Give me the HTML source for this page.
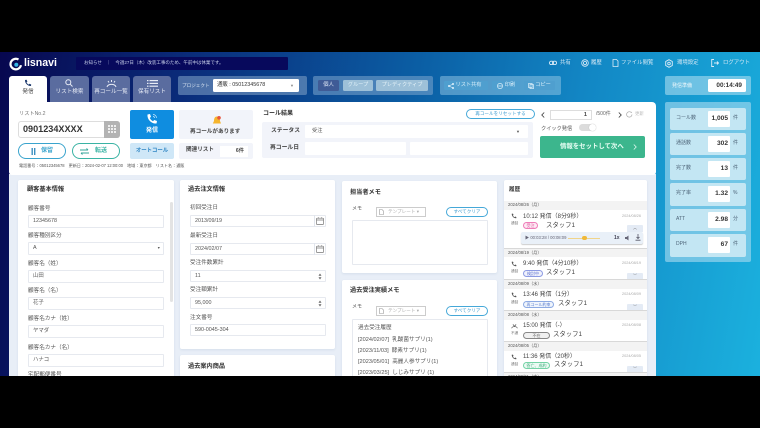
<!DOCTYPE html>
<html lang="ja"><head><meta charset="utf-8"><title>lisnavi</title>
<style>
*{box-sizing:border-box;margin:0;padding:0}
html,body{width:760px;height:428px;overflow:hidden;background:#000}
body{position:relative;font-family:"Liberation Sans","Noto Sans CJK JP",sans-serif;color:#333}
#v{position:absolute;left:0;top:52px;width:760px;height:324px;overflow:hidden;background:linear-gradient(100deg,#07074f 0%,#0a2a78 22%,#0b5fa5 52%,#1286c4 72%,#1bb1de 100%);filter:blur(.25px)}
#v div,#v span,#v svg{position:absolute}
.t{white-space:nowrap;line-height:1}
.b{background:#fff;border:1px solid #e6e9ef;border-radius:1px}
.card{background:#fff;border-radius:2px;box-shadow:0 1px 2px rgba(120,140,175,.16)}
.l{font-size:5.6px;color:#555;white-space:nowrap;line-height:1}
.i{font-size:5.4px;color:#555;white-space:nowrap;line-height:1}
.h{font-size:6.2px;font-weight:700;color:#333;white-space:nowrap;line-height:1}
.tab{background:#5a6c9f;border-radius:3px 3px 0 0;top:24px;height:26px}
.tab .t{left:0;right:0;text-align:center;color:#e8ecf6;font-size:5.6px;top:14px}
.box{background:rgba(175,200,225,.45);border-radius:2px}
.nav{color:#d5e8f5;font-size:5.4px;top:9px}
.st{left:670px;width:76px;height:22.5px;background:#c3e6f3;border-radius:2px}
.st .n{left:38px;top:3px;width:22px;height:16px;background:#fff;border-radius:1px;font-size:6.6px;font-weight:700;color:#333;text-align:right;padding:5px 2px 0 0;line-height:1}
.st .a{left:6px;top:8px;font-size:5px;color:#4d6478;white-space:nowrap;line-height:1}
.st .u{left:63px;top:8px;font-size:5px;color:#4d6478;line-height:1}
.d{left:504px;width:143px;height:9px;background:#f3f3f3;font-size:4.2px;color:#555;padding:2.4px 0 0 4px;line-height:1;white-space:nowrap}
.ln{left:504px;width:143px;height:1px;background:#d8d8d8}
.tm{left:523px;font-size:6px;color:#444;white-space:nowrap;line-height:1}
.rd{left:622px;font-size:3.8px;color:#aaa;line-height:1;white-space:nowrap}
.sm{left:511px;font-size:3.6px;color:#777;line-height:1}
.bd{height:7px;border-radius:4px;font-size:4px;text-align:center;line-height:6px;border:.6px solid}
.nm{font-size:6.4px;color:#444;white-space:nowrap;line-height:1}
.ex{left:627px;width:16px;height:6px;background:#e4ebf5;border-radius:1px 1px 0 0}
.cb{height:10px;border:.8px solid #45a8d8;border-radius:5px;font-size:4.6px;color:#3c9bd0;text-align:center;line-height:8.5px;white-space:nowrap;background:#fff}
.tp{width:50px;height:9.5px;border:.7px solid #ccc;background:#fff;font-size:4.6px;color:#aaa;padding:2px 0 0 11px;line-height:1;white-space:nowrap}
.ml{left:358px;font-size:5.6px;color:#555;white-space:nowrap;line-height:1}
.ar{font-size:5px;color:#666;line-height:1}
.pbtn{height:9px;background:#4f9fcf;border-radius:1px;font-size:5.2px;color:#d9eefa;text-align:center;line-height:9px;white-space:nowrap}
</style></head><body>
<div id="v">
<!-- header -->
<svg style="left:9px;top:4.5px" width="14" height="14" viewBox="0 0 14 14"><path d="M9.5 2.5 A5.3 5.3 0 1 0 12 8.2" fill="none" stroke="#fff" stroke-width="2.2"/><circle cx="7.3" cy="7.8" r="2" fill="#36b5e5"/></svg>
<div class="t" style="left:24px;top:6px;font-size:10.6px;font-weight:700;color:#fff">lisnavi</div>
<div style="left:76px;top:5px;width:212px;height:13px;background:#07095c;border-radius:1px"></div>
<div class="t" style="left:84px;top:9px;font-size:4.5px;color:#c8d0ea">お知らせ　｜　今週27日（木）改装工事のため、午前中は休業です。</div>

<svg style="left:549px;top:8px" width="8" height="6" viewBox="0 0 8 6" fill="none" stroke="#dcecf8" stroke-width=".9"><rect x=".5" y="1.2" width="4" height="3.4" rx="1.6"/><rect x="3.5" y="1.2" width="4" height="3.4" rx="1.6"/></svg>
<div class="t nav" style="left:560px">共有</div>
<svg style="left:581px;top:7px" width="8" height="8" viewBox="0 0 8 8" fill="none" stroke="#dcecf8" stroke-width=".8"><circle cx="4" cy="4" r="3.3"/><circle cx="4" cy="4" r="1.6"/></svg>
<div class="t nav" style="left:591px">履歴</div>
<svg style="left:612px;top:7px" width="7" height="8" viewBox="0 0 7 8" fill="none" stroke="#dcecf8" stroke-width=".8"><path d="M1 .5H4.5L6 2V7.5H1Z"/></svg>
<div class="t nav" style="left:621px">ファイル閲覧</div>
<svg style="left:665px;top:6.5px" width="8" height="9" viewBox="0 0 8 9" fill="none" stroke="#dcecf8" stroke-width=".9"><path d="M4 .7 7.3 2.5V6.5L4 8.3 .7 6.5V2.5Z"/><circle cx="4" cy="4.5" r="1.3"/></svg>
<div class="t nav" style="left:677px">環境設定</div>
<svg style="left:711px;top:7px" width="8" height="8" viewBox="0 0 8 8" fill="none" stroke="#dcecf8" stroke-width=".9"><path d="M3 .5H.7V7.5H3M3 4H7.5M6 2.5 7.5 4 6 5.5"/></svg>
<div class="t nav" style="left:723px">ログアウト</div>

<!-- tabs -->
<div class="tab" style="left:9px;width:38px;background:#fff;height:27px"><svg style="left:15px;top:3px" width="8" height="8" viewBox="0 0 8 8"><path d="M1 1 2.6 .8 3.4 2.6 2.5 3.4C3 4.4 3.7 5.1 4.7 5.6L5.5 4.7 7.2 5.5 7 7C3.8 7.3.8 4.2 1 1Z" fill="#1e3a6e"/></svg><div class="t" style="color:#444">発信</div></div>
<div class="tab" style="left:50px;width:39px"><svg style="left:15px;top:3px" width="8" height="8" viewBox="0 0 8 8" fill="none" stroke="#e8ecf6" stroke-width="1"><circle cx="3.3" cy="3.3" r="2.5"/><path d="M5.2 5.2 7.5 7.5"/></svg><div class="t">リスト検索</div></div>
<div class="tab" style="left:92px;width:38px"><svg style="left:14px;top:3px" width="11" height="9" viewBox="0 0 11 9" fill="none" stroke="#e8ecf6" stroke-width="1"><path d="M1 8C2 4.5 9 4.5 10 8M5.5 1V3M2 2 3 3.5M9 2 8 3.5"/></svg><div class="t">再コール一覧</div></div>
<div class="tab" style="left:133px;width:38px"><svg style="left:14px;top:4px" width="11" height="7" viewBox="0 0 11 7" fill="#e8ecf6"><rect width="1.5" height="1.2"/><rect x="2.5" width="8.5" height="1.2"/><rect y="2.8" width="1.5" height="1.2"/><rect x="2.5" y="2.8" width="8.5" height="1.2"/><rect y="5.6" width="1.5" height="1.2"/><rect x="2.5" y="5.6" width="8.5" height="1.2"/></svg><div class="t">保有リスト</div></div>

<!-- project -->
<div class="box" style="left:178px;top:24px;width:129px;height:19px;background:rgba(120,155,195,.6)"></div>
<div class="t" style="left:182px;top:32px;font-size:4.6px;color:#dbe6f3">プロジェクト</div>
<div style="left:213px;top:27px;width:86px;height:13px;background:#fff;border-radius:1.5px"></div>
<div class="t" style="left:217px;top:31px;font-size:5.4px;color:#333">通販 : 05012345678</div>
<div class="t" style="left:290px;top:32px;font-size:4px;color:#888">▼</div>
<!-- group -->
<div class="box" style="left:313px;top:24px;width:120px;height:19px;background:rgba(125,165,205,.55)"></div>
<div class="t" style="left:318px;top:28px;width:21px;height:11px;background:#3f5b96;border-radius:1.5px;font-size:5.4px;color:#d8e2f2;text-align:center;line-height:11px">個人</div>
<div class="t" style="left:343px;top:28px;width:30px;height:11px;background:#9dc0d8;border-radius:1.5px;font-size:5.2px;color:#dff0f8;text-align:center;line-height:11px">グループ</div>
<div class="t" style="left:376px;top:28px;width:52px;height:11px;background:#9dc0d8;border-radius:1.5px;font-size:5.2px;color:#e6f3f9;text-align:center;line-height:11px">プレディクティブ</div>
<!-- tools -->
<div class="box" style="left:440px;top:24px;width:121px;height:19px;background:rgba(150,200,230,.5)"></div>
<div class="pbtn" style="left:444px;top:29px;width:44px;padding-left:5px">リスト共有</div>
<svg style="left:448px;top:30.5px" width="6" height="6" viewBox="0 0 6 6" fill="#dff1fb"><circle cx="1" cy="3" r="1"/><circle cx="5" cy="1" r="1"/><circle cx="5" cy="5" r="1"/><path d="M1 3 5 1M1 3 5 5" stroke="#dff1fb" stroke-width=".6"/></svg>
<div class="pbtn" style="left:492px;top:29px;width:28px;padding-left:8px">印刷</div>
<svg style="left:497px;top:30.5px" width="6" height="6" viewBox="0 0 6 6" fill="none" stroke="#dff1fb" stroke-width=".7"><circle cx="3" cy="3" r="2.6"/><path d="M1 3H5"/></svg>
<div class="pbtn" style="left:524px;top:29px;width:31px;padding-left:7px">コピー</div>
<svg style="left:528px;top:30.5px" width="6" height="6" viewBox="0 0 6 6" fill="none" stroke="#dff1fb" stroke-width=".7"><rect x=".5" y=".5" width="3.6" height="4"/><rect x="2" y="1.6" width="3.5" height="4"/></svg>
<!-- right top -->
<div class="box" style="left:665px;top:24px;width:86px;height:19px;background:rgba(170,220,240,.6)"></div>
<div class="t" style="left:672px;top:31.5px;font-size:5px;color:#eef8fc">発信準備</div>
<div class="t" style="left:708px;top:27px;width:38px;height:13px;background:#fff;border-radius:1.5px;font-size:6.4px;font-weight:700;color:#333;text-align:right;padding-right:4px;line-height:13px">00:14:49</div>

<!-- main -->
<div style="left:9px;top:122px;width:647px;height:202px;background:#e8eef7"></div>
<div style="left:9px;top:50px;width:647px;height:73px;background:#fff;border-radius:0 4px 3px 3px"></div>
<div class="t" style="left:19px;top:60px;font-size:5.2px;color:#777">リストNo.2</div>
<div style="left:18px;top:69px;width:102px;height:17px;background:#fff;border:1px solid #ddd;border-radius:3px"></div>
<div class="t" style="left:23px;top:73px;font-size:9.1px;font-weight:700;color:#333">0901234XXXX</div>
<div style="left:104px;top:69px;width:16px;height:17px;background:#b3b3b3;border-radius:0 3px 3px 0"></div>
<svg style="left:108px;top:73px" width="8" height="8" viewBox="0 0 8 8" fill="#eee"><rect width="2" height="2"/><rect x="3" width="2" height="2"/><rect x="6" width="2" height="2"/><rect y="3" width="2" height="2"/><rect x="3" y="3" width="2" height="2"/><rect x="6" y="3" width="2" height="2"/><rect y="6" width="2" height="2"/><rect x="3" y="6" width="2" height="2"/><rect x="6" y="6" width="2" height="2"/></svg>
<div style="left:18px;top:91px;width:48px;height:16px;border:1px solid #3aa4cd;border-radius:8px;background:#fff"></div>
<svg style="left:31px;top:95.5px" width="5" height="7" viewBox="0 0 5 7" fill="#3c8fc0"><rect x=".5" width="1.4" height="7"/><rect x="3" width="1.4" height="7"/></svg>
<div class="t" style="left:41px;top:96px;font-size:6px;color:#3aa4cd;font-weight:700">保留</div>
<div style="left:72px;top:91px;width:48px;height:16px;border:1px solid #3ab3a4;border-radius:8px;background:#fff"></div>
<svg style="left:80px;top:95.5px" width="9" height="7" viewBox="0 0 9 7" fill="none" stroke="#34a59a" stroke-width=".9"><path d="M0 2H8M6.5.5 8 2M9 5H1M2.5 6.5 1 5"/></svg>
<div class="t" style="left:95px;top:96px;font-size:6px;color:#3ab3a4;font-weight:700">転送</div>
<div style="left:130px;top:58px;width:44px;height:29px;background:#0f8de0;border-radius:2px"></div>
<svg style="left:146px;top:61px" width="12" height="12" viewBox="0 0 12 12"><path d="M1.5 1.5 4 1 5 3.8 3.8 5C4.5 6.5 5.5 7.6 7 8.2L8.2 7 11 8 10.5 10.5C5.5 11 1 6.5 1.5 1.5Z" fill="#fff"/><path d="M7 1.5A3.5 3.5 0 0 1 10.5 5M7 3.5A1.5 1.5 0 0 1 8.5 5" fill="none" stroke="#cfeafa" stroke-width=".7"/></svg>
<div class="t" style="left:146px;top:76px;font-size:6px;font-weight:700;color:#fff">発信</div>
<div class="t" style="left:130px;top:91px;width:44px;height:16px;background:#cfe7f7;border-radius:2px;font-size:5.4px;font-weight:700;color:#2f86c4;text-align:center;line-height:16px">オートコール</div>
<div style="left:179px;top:58px;width:74px;height:29px;background:#f2f4fa;border-radius:2px"></div>
<svg style="left:212px;top:63px" width="10" height="11" viewBox="0 0 10 11"><path d="M5 1.5C2.5 1.5 2 4 2 6L.8 8.5H9L8 6C8 4 7.5 1.5 5 1.5Z" fill="#f5b52e"/><circle cx="7" cy="2.8" r="1.8" fill="#e8553c"/></svg>
<div class="t" style="left:190px;top:78px;font-size:5.6px;font-weight:700;color:#444">再コールがあります</div>
<div style="left:179px;top:91px;width:74px;height:16px;background:#f2f4fa;border-radius:2px"></div>
<div class="t" style="left:186px;top:96px;font-size:5.6px;font-weight:700;color:#444">関連リスト</div>
<div class="t" style="left:220px;top:94px;width:28px;height:11px;background:#fff;font-size:5.2px;color:#444;text-align:right;padding-right:4px;line-height:11px;font-weight:700">6件</div>
<div class="t" style="left:19px;top:112px;font-size:4.1px;color:#555">電話番号：05012345678　更新日：2024-02-07 12:00:00　地域：東京都　リスト名：通販</div>
<div class="t" style="left:263px;top:59px;font-size:6px;font-weight:700;color:#333">コール結果</div>
<div style="left:262px;top:70px;width:271px;height:36px;background:#f2f4fa;border-radius:2px"></div>
<div class="t" style="left:271px;top:77px;font-size:5.8px;font-weight:700;color:#444">ステータス</div>
<div style="left:305px;top:73px;width:223px;height:13px;background:#fff;border-radius:1px"></div>
<div class="t" style="left:312px;top:77px;font-size:5.2px;color:#555">受注</div>
<div class="t" style="left:516px;top:78px;font-size:4px;color:#555">▼</div>
<div class="t" style="left:270px;top:94px;font-size:5.8px;font-weight:700;color:#444">再コール日</div>
<div style="left:305px;top:90px;width:101px;height:13px;background:#fff;border-radius:1px"></div>
<div style="left:410px;top:90px;width:118px;height:13px;background:#fff;border-radius:1px"></div>
<div class="cb" style="left:466px;top:57px;width:69px">再コールをリセットする</div>
<svg style="left:541px;top:60px" width="4" height="6" viewBox="0 0 4 6" fill="none" stroke="#444" stroke-width=".9"><path d="M3.2.5 .8 3 3.2 5.5"/></svg>
<div class="t" style="left:550px;top:57.5px;width:42px;height:10px;background:#fff;border:1px solid #ddd;font-size:5.6px;color:#444;text-align:right;padding-right:4px;font-weight:700;line-height:8.5px">1</div>
<div class="t" style="left:596px;top:60px;font-size:5px;color:#666">/500件</div>
<svg style="left:618px;top:60px" width="4" height="6" viewBox="0 0 4 6" fill="none" stroke="#444" stroke-width=".9"><path d="M.8.5 3.2 3 .8 5.5"/></svg>
<svg style="left:626px;top:58.5px" width="7" height="7" viewBox="0 0 7 7" fill="none" stroke="#aaa" stroke-width=".7"><path d="M6 3.5A2.7 2.7 0 1 1 4.5 1L6 1.5"/></svg>
<div class="t" style="left:635px;top:60px;font-size:4.4px;color:#bbb">更新</div>
<div class="t" style="left:541px;top:75px;font-size:5.2px;color:#555">クイック発信</div>
<div style="left:579px;top:72px;width:17px;height:7px;background:#dcdcdc;border-radius:4px"></div>
<div style="left:589px;top:72px;width:7px;height:7px;background:#fff;border-radius:4px;box-shadow:0 0 1px #aaa"></div>
<div class="t" style="left:540px;top:84px;width:105px;height:22px;background:#3cb68d;border-radius:2px;font-size:6.4px;font-weight:700;color:#eafff5;line-height:22px;padding-left:20px">情報をセットして次へ</div>
<svg style="left:633px;top:92px" width="4" height="6" viewBox="0 0 4 6" fill="none" stroke="#dff8ee" stroke-width=".8"><path d="M.8.5 3.2 3 .8 5.5"/></svg>

<!-- customer card -->
<div class="card" style="left:18px;top:128px;width:156px;height:200px"></div>
<div class="h" style="left:27px;top:135px">顧客基本情報</div>
<div style="left:170px;top:150px;width:3px;height:100px;background:#e3e3e3;border-radius:2px"></div>
<div class="l" style="left:28px;top:155px">顧客番号</div><div class="b" style="left:28px;top:163px;width:136px;height:13px"></div><div class="i" style="left:33px;top:167px">12345678</div>
<div class="l" style="left:28px;top:182px">顧客種別区分</div><div class="b" style="left:28px;top:190px;width:136px;height:12.5px"></div><div class="i" style="left:33px;top:194px">A</div><div class="t" style="left:157px;top:195px;font-size:3.6px;color:#555">▼</div>
<div class="l" style="left:28px;top:210px">顧客名（姓）</div><div class="b" style="left:28px;top:218px;width:136px;height:13px"></div><div class="i" style="left:33px;top:222px">山田</div>
<div class="l" style="left:28px;top:237px">顧客名（名）</div><div class="b" style="left:28px;top:245px;width:136px;height:13px"></div><div class="i" style="left:33px;top:249px">花子</div>
<div class="l" style="left:28px;top:265px">顧客名カナ（姓）</div><div class="b" style="left:28px;top:273px;width:136px;height:13px"></div><div class="i" style="left:33px;top:277px">ヤマダ</div>
<div class="l" style="left:28px;top:294px">顧客名カナ（名）</div><div class="b" style="left:28px;top:302px;width:136px;height:13px"></div><div class="i" style="left:33px;top:306px">ハナコ</div>
<div class="l" style="left:28px;top:321px">宅配郵便番号</div>

<!-- orders -->
<div class="card" style="left:180px;top:128px;width:155px;height:169px"></div>
<div class="h" style="left:188px;top:135px">過去注文情報</div>
<div class="l" style="left:190px;top:154px">初回受注日</div><div class="b" style="left:190px;top:163px;width:136px;height:12px"></div><div class="i" style="left:195px;top:166.5px">2013/09/19</div>
<div style="left:314px;top:163px;width:1px;height:12px;background:#e1e5ec"></div>
<svg style="left:316px;top:165px" width="8" height="8" viewBox="0 0 8 8" fill="none" stroke="#777" stroke-width=".7"><rect x=".5" y="1.2" width="7" height="6.3" rx=".6"/><path d="M.5 3H7.5M2.3.3V1.6M5.7.3V1.6"/></svg>
<div class="l" style="left:190px;top:182px">最新受注日</div><div class="b" style="left:190px;top:191px;width:136px;height:12px"></div><div class="i" style="left:195px;top:194.5px">2024/02/07</div>
<div style="left:314px;top:191px;width:1px;height:12px;background:#e1e5ec"></div>
<svg style="left:316px;top:193px" width="8" height="8" viewBox="0 0 8 8" fill="none" stroke="#777" stroke-width=".7"><rect x=".5" y="1.2" width="7" height="6.3" rx=".6"/><path d="M.5 3H7.5M2.3.3V1.6M5.7.3V1.6"/></svg>
<div class="l" style="left:190px;top:209px">受注件数累計</div><div class="b" style="left:190px;top:218px;width:136px;height:12px"></div><div class="i" style="left:195px;top:221.5px">11</div>
<svg style="left:318px;top:220.5px" width="4" height="7" viewBox="0 0 4 7" fill="#666"><path d="M2 .5 3.5 2.7H.5ZM2 6.5 3.5 4.3H.5Z"/></svg>
<div class="l" style="left:190px;top:236px">受注額累計</div><div class="b" style="left:190px;top:245px;width:136px;height:12px"></div><div class="i" style="left:195px;top:248.5px">95,000</div>
<svg style="left:318px;top:247.5px" width="4" height="7" viewBox="0 0 4 7" fill="#666"><path d="M2 .5 3.5 2.7H.5ZM2 6.5 3.5 4.3H.5Z"/></svg>
<div class="l" style="left:190px;top:264px">注文番号</div><div class="b" style="left:190px;top:272px;width:136px;height:12px"></div><div class="i" style="left:195px;top:275.5px">590-0045-304</div>
<div class="card" style="left:180px;top:303px;width:155px;height:40px"></div>
<div class="h" style="left:188px;top:312px">過去案内商品</div>

<!-- memo -->
<div class="card" style="left:342px;top:129px;width:155px;height:92px"></div>
<div class="h" style="left:350px;top:138px">担当者メモ</div>
<div class="l" style="left:352px;top:155px;font-size:5px">メモ</div>
<div class="tp" style="left:376px;top:155px">テンプレート ▾</div>
<svg style="left:379px;top:156.5px" width="5" height="6" viewBox="0 0 5 6" fill="none" stroke="#999" stroke-width=".6"><path d="M.5.5H3L4.5 2V5.5H.5Z"/></svg>
<div class="cb" style="left:446px;top:155px;width:42px">すべてクリア</div>
<div class="b" style="left:352px;top:168px;width:136px;height:45px"></div>
<div class="card" style="left:342px;top:228px;width:155px;height:100px"></div>
<div class="h" style="left:350px;top:236px">過去受注実績メモ</div>
<div class="l" style="left:352px;top:253px;font-size:5px">メモ</div>
<div class="tp" style="left:376px;top:254px">テンプレート ▾</div>
<svg style="left:379px;top:255.5px" width="5" height="6" viewBox="0 0 5 6" fill="none" stroke="#999" stroke-width=".6"><path d="M.5.5H3L4.5 2V5.5H.5Z"/></svg>
<div class="cb" style="left:446px;top:254px;width:42px">すべてクリア</div>
<div class="b" style="left:352px;top:267px;width:136px;height:60px"></div>
<div class="ml" style="top:274px">過去受注履歴</div>
<div class="ml" style="top:286px">[2024/02/07]&nbsp; 乳酸菌サプリ(1)</div>
<div class="ml" style="top:297px">[2023/11/03]&nbsp; 酵素サプリ(1)</div>
<div class="ml" style="top:308px">[2023/05/01]&nbsp; 高麗人参サプリ(1)</div>
<div class="ml" style="top:319px">[2023/03/25]&nbsp; しじみサプリ (1)</div>

<!-- history -->
<div class="card" style="left:504px;top:128px;width:143px;height:200px"></div>
<div class="h" style="left:509px;top:136px;font-size:5.6px">履歴</div>
<div class="d" style="top:149px">2024/08/26（月）</div>
<svg style="left:511px;top:161px" width="6" height="6" viewBox="0 0 8 8"><path d="M1 1 2.6 .8 3.4 2.6 2.5 3.4C3 4.4 3.7 5.1 4.7 5.6L5.5 4.7 7.2 5.5 7 7C3.8 7.3.8 4.2 1 1Z" fill="#555"/></svg>
<div class="sm" style="top:170px">通話</div>
<div class="tm" style="top:162px">10:12 発信（8分9秒）</div>
<div class="rd" style="top:163px">2024/08/26</div>
<div class="bd" style="left:523px;top:170px;width:15px;color:#e0559e;border-color:#ef7db9;background:#fdeaf4">受注</div>
<div class="nm" style="left:546px;top:171px">スタッフ1</div>
<div class="ex" style="top:173px;height:7px"></div><div class="t ar" style="left:633px;top:174px;font-size:4px">︿</div>
<div style="left:521px;top:180px;width:122px;height:12px;background:#e9f0f8;border-radius:2px;box-shadow:0 1px 1px rgba(0,0,0,.2)"></div>
<div class="t" style="left:525px;top:184px;font-size:4.2px;color:#667">▶ 00:03:28 / 00:08:09</div>
<div style="left:568px;top:185.5px;width:32px;height:1.5px;background:#f0d48a"></div>
<div style="left:582px;top:183.5px;width:4.5px;height:4.5px;background:#f0b93a;border-radius:50%"></div>
<div class="t" style="left:614px;top:184px;font-size:5px;color:#445;font-weight:700">1x</div>
<svg style="left:625px;top:183px" width="6" height="6" viewBox="0 0 6 6" fill="#667"><path d="M0 2H1.5L3.5.5V5.5L1.5 4H0Z"/></svg>
<svg style="left:635px;top:182px" width="6" height="7" viewBox="0 0 6 7" fill="none" stroke="#556" stroke-width=".8"><path d="M3 0V4.3M1.5 3 3 4.5 4.5 3M.5 6.2H5.5"/></svg>
<div class="ln" style="top:196px"></div>
<div class="d" style="top:197px;height:8px;padding-top:2px">2024/08/19（月）</div>
<svg style="left:511px;top:209px" width="6" height="6" viewBox="0 0 8 8"><path d="M1 1 2.6 .8 3.4 2.6 2.5 3.4C3 4.4 3.7 5.1 4.7 5.6L5.5 4.7 7.2 5.5 7 7C3.8 7.3.8 4.2 1 1Z" fill="#555"/></svg>
<div class="sm" style="top:218px">通話</div>
<div class="tm" style="top:209px">9:40 発信（4分10秒）</div>
<div class="rd" style="top:210px">2024/08/19</div>
<div class="bd" style="left:523px;top:218px;width:20px;color:#5b6fd0;border-color:#8d9be3;background:#f0f2fc">検討中</div>
<div class="nm" style="left:546px;top:218px">スタッフ1</div>
<div class="ex" style="top:221px"></div><div class="t ar" style="left:633px;top:222px;font-size:4px">﹀</div>
<div class="ln" style="top:227px"></div>
<div class="d" style="top:228px">2024/08/09（水）</div>
<svg style="left:511px;top:240px" width="6" height="6" viewBox="0 0 8 8"><path d="M1 1 2.6 .8 3.4 2.6 2.5 3.4C3 4.4 3.7 5.1 4.7 5.6L5.5 4.7 7.2 5.5 7 7C3.8 7.3.8 4.2 1 1Z" fill="#555"/></svg>
<div class="sm" style="top:249px">通話</div>
<div class="tm" style="top:240px">13:46 発信（1分）</div>
<div class="rd" style="top:241px">2024/08/09</div>
<div class="bd" style="left:523px;top:249px;width:31px;color:#5b7fd0;border-color:#8daae3;background:#f0f5fc">再コール約束</div>
<div class="nm" style="left:558px;top:249px">スタッフ1</div>
<div class="ex" style="top:252px"></div><div class="t ar" style="left:633px;top:253px;font-size:4px">﹀</div>
<div class="ln" style="top:258px"></div>
<div class="d" style="top:259px">2024/08/08（水）</div>
<svg style="left:511px;top:271px" width="7" height="6" viewBox="0 0 11 9" fill="none" stroke="#555" stroke-width="1.1"><path d="M1 8C2 4.5 9 4.5 10 8M3 2 5.5 5 8 2"/></svg>
<div class="sm" style="top:280px">不通</div>
<div class="tm" style="top:271px">15:00 発信（-）</div>
<div class="rd" style="top:272px">2024/08/08</div>
<div class="bd" style="left:523px;top:280px;width:27px;color:#666;border-color:#888;background:#f1f1f1">不在</div>
<div class="nm" style="left:553px;top:280px">スタッフ1</div>
<div class="ln" style="top:289px"></div>
<div class="d" style="top:290px">2024/08/05（月）</div>
<svg style="left:511px;top:302px" width="6" height="6" viewBox="0 0 8 8"><path d="M1 1 2.6 .8 3.4 2.6 2.5 3.4C3 4.4 3.7 5.1 4.7 5.6L5.5 4.7 7.2 5.5 7 7C3.8 7.3.8 4.2 1 1Z" fill="#555"/></svg>
<div class="sm" style="top:311px">通話</div>
<div class="tm" style="top:302px">11:36 発信（20秒）</div>
<div class="rd" style="top:303px">2024/08/05</div>
<div class="bd" style="left:523px;top:310px;width:27px;color:#3fae7e;border-color:#74d3a6;background:#ecfaf3">答亡、成約</div>
<div class="nm" style="left:554px;top:310px">スタッフ1</div>
<div class="ex" style="top:314px"></div><div class="t ar" style="left:633px;top:315px;font-size:4px">﹀</div>
<div class="ln" style="top:320px"></div>
<div class="d" style="top:321px">2024/08/01（木）</div>

<!-- stats -->
<div class="box" style="left:665px;top:50px;width:86px;height:160px;background:rgba(160,215,238,.65)"></div>
<div class="st" style="top:55.5px"><div class="a">コール数</div><div class="n">1,005</div><div class="u">件</div></div>
<div class="st" style="top:80.5px"><div class="a">通話数</div><div class="n">302</div><div class="u">件</div></div>
<div class="st" style="top:105.5px"><div class="a">完了数</div><div class="n">13</div><div class="u">件</div></div>
<div class="st" style="top:131px"><div class="a">完了率</div><div class="n">1.32</div><div class="u">%</div></div>
<div class="st" style="top:156.5px"><div class="a">ATT</div><div class="n">2.98</div><div class="u">分</div></div>
<div class="st" style="top:182px"><div class="a">DPH</div><div class="n">67</div><div class="u">件</div></div>
</div>
</body></html>
